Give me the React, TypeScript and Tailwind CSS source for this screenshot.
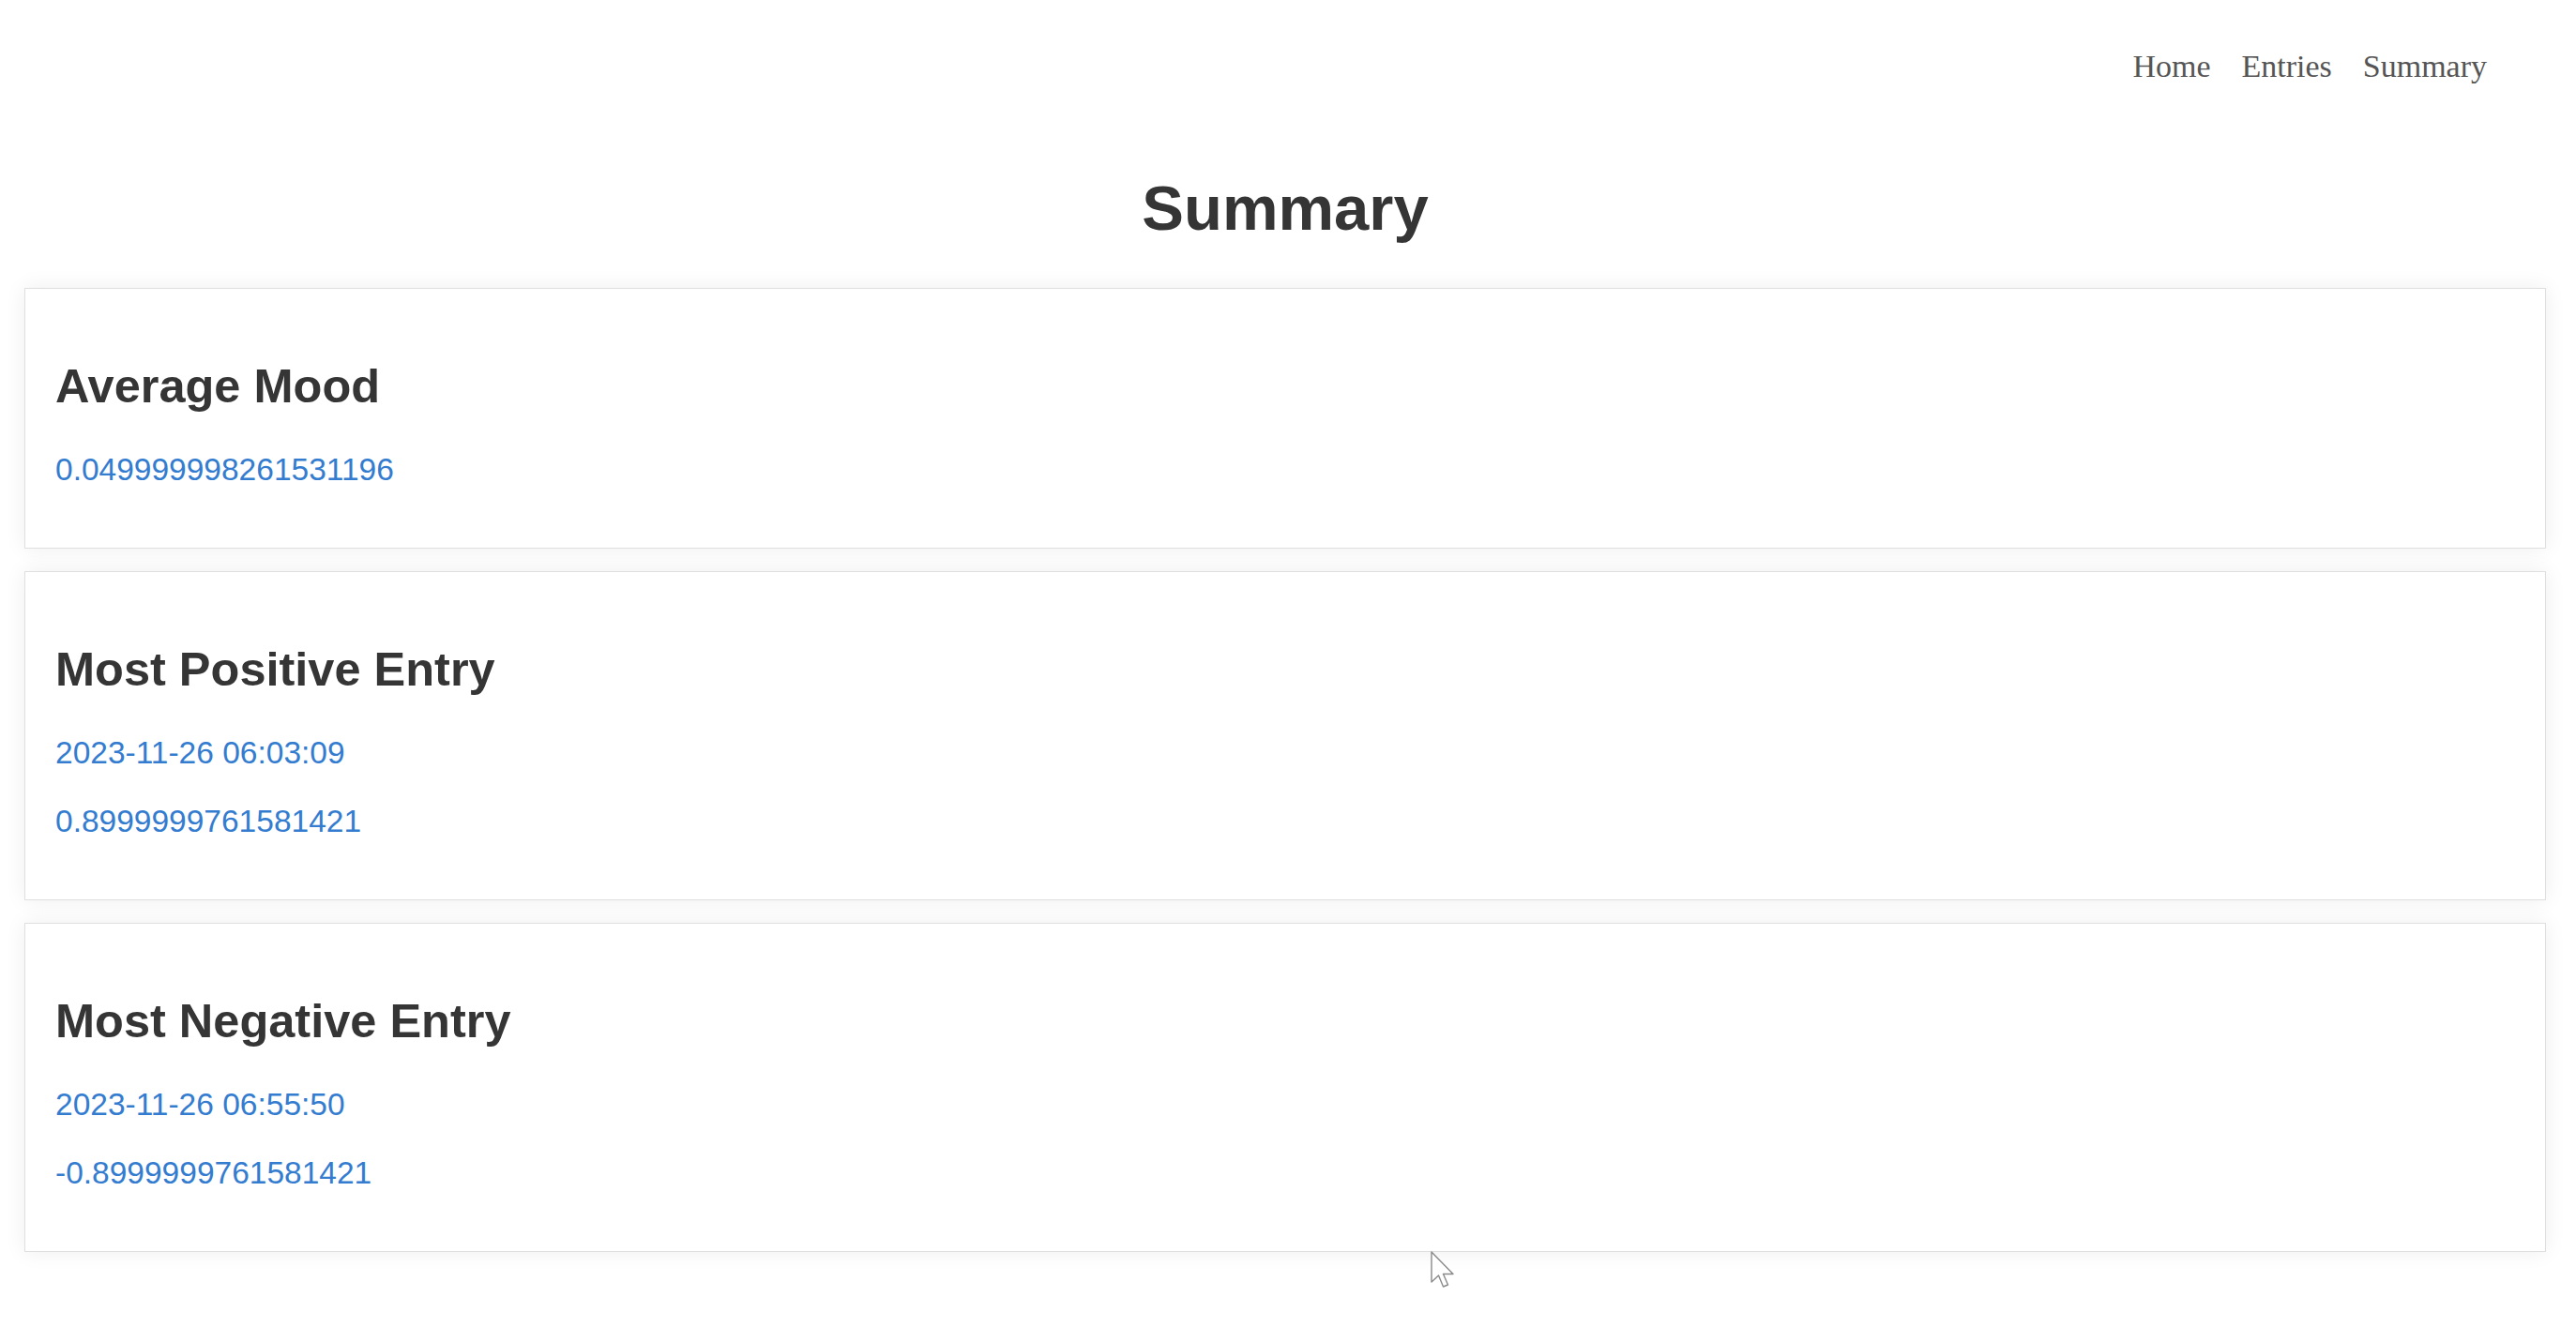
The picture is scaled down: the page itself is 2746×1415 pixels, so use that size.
import React from "react";

const cards = [
  { title: "Average Mood", values: ["0.049999998261531196"] },
  { title: "Most Positive Entry", values: ["2023-11-26 06:03:09", "0.8999999761581421"] },
  { title: "Most Negative Entry", values: ["2023-11-26 06:55:50", "-0.8999999761581421"] },
];

export default function App() {
  return (
    <div className="relative min-h-[1415px] w-full bg-white" style={{ fontFamily: '"Liberation Sans", Arial, sans-serif' }}>
      <nav
        className="flex justify-end gap-[33px] pr-[95px] pt-[52px] text-[34px] leading-[38px] text-[#555555]"
        style={{ fontFamily: '"Liberation Serif", "Times New Roman", serif' }}
      >
        <a>Home</a>
        <a>Entries</a>
        <a>Summary</a>
      </nav>
      <div className="pl-[26px] pr-[32px]">
        <h1 className="mt-[94px] text-center text-[67px] font-bold leading-[76px] text-[#353535]">Summary</h1>
        <div className="mt-[47px] flex flex-col gap-[24px]">
          {cards.map((c) => (
            <div
              key={c.title}
              className="border border-[#dfdfdf] bg-white pb-[64px] pl-[32px] pt-[75px] shadow-[0_0_22px_rgba(0,0,0,0.07)]"
            >
              <h2 className="text-[50.5px] font-bold leading-[58px] text-[#353535]">{c.title}</h2>
              <div className="mt-[41px] flex flex-col gap-[35px]">
                {c.values.map((v) => (
                  <p key={v} className="text-[33.5px] leading-[38px] text-[#337ccf]">
                    {v}
                  </p>
                ))}
              </div>
            </div>
          ))}
        </div>
      </div>
      <svg className="absolute left-[1525px] top-[1334px]" width="28" height="42" viewBox="0 0 28 42">
        <path
          d="M1 1 L1 33 L8.5 26 L13.5 38 L18.5 36 L13.5 24.5 L24 24.5 Z"
          fill="white"
          stroke="#8a8a8a"
          strokeWidth="1.4"
          strokeLinejoin="round"
        />
      </svg>
    </div>
  );
}
